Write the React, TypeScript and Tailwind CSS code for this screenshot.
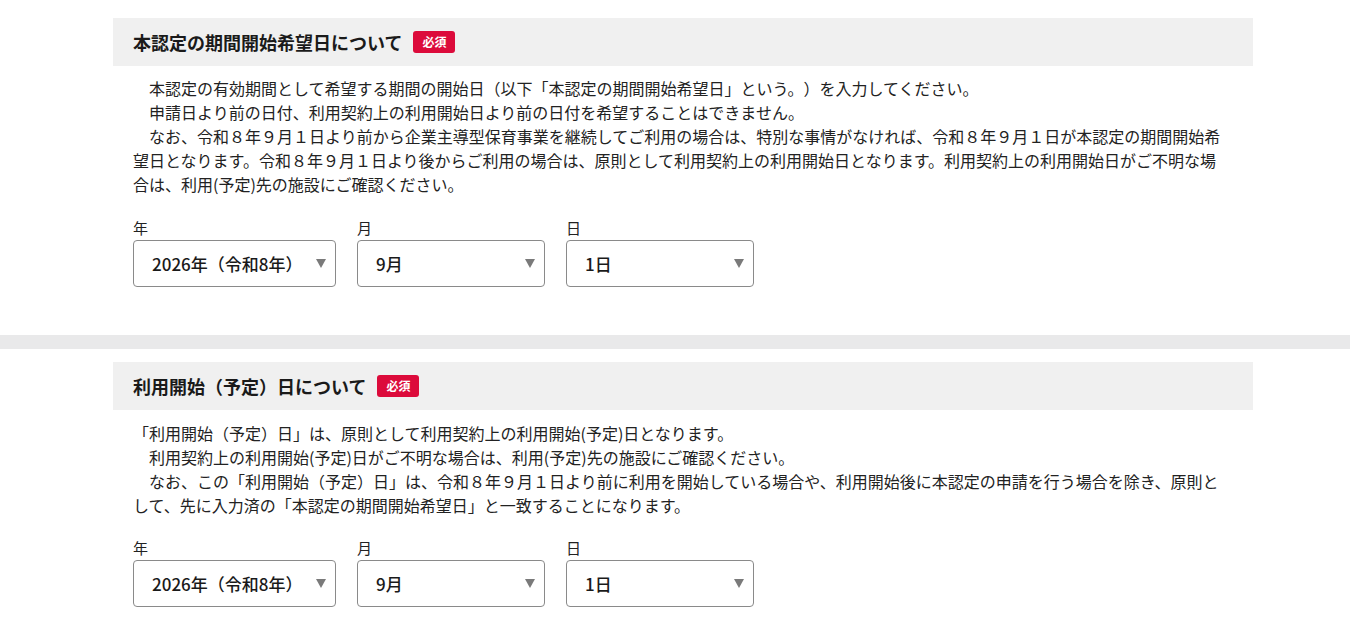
import React from 'react';

const font = { fontFamily: '"Noto Sans CJK JP", "Noto Sans", sans-serif' };

const DateSelect = ({ value, width }: { value: string; width: string }) => (
  <div className={`relative ${width} h-[47px]`}>
    <div className="flex h-full items-center rounded-[4px] border border-[#8a8a8a] bg-white pl-[18px] text-[17px] font-medium text-[#1a1a1a]">
      {value}
    </div>
    <svg
      className="absolute right-[10px] top-[19px] h-[9px] w-[10px]"
      viewBox="0 0 10 9"
    >
      <path d="M0 0 L10 0 L5 9 Z" fill="#7a7a7a" />
    </svg>
  </div>
);

const DateRow = () => (
  <div className="flex gap-[21px]">
    {[
      { label: '年', value: '2026年（令和8年）', width: 'w-[203px]' },
      { label: '月', value: '9月', width: 'w-[188px]' },
      { label: '日', value: '1日', width: 'w-[188px]' },
    ].map((item, index) => (
      <div key={index} className="flex flex-col gap-[2px]">
        <span className="text-[15px] leading-[20px] text-[#222]">{item.label}</span>
        <DateSelect value={item.value} width={item.width} />
      </div>
    ))}
  </div>
);

const SectionHeader = ({ title }: { title: string }) => (
  <div className="flex h-[48px] items-center gap-[11px] bg-[#f0f0f0] px-[20px]">
    <h2 className="text-[18px] font-bold text-[#1a1a1a]">{title}</h2>
    <span className="flex h-[22px] w-[42px] items-center justify-center rounded-[3px] bg-[#dc0b3b] text-[12px] font-bold text-white">
      必須
    </span>
  </div>
);

const App = () => {
  return (
    <div className="min-h-screen bg-white [text-spacing-trim:space-all]" style={font}>
      <section className="ml-[113px] w-[1140px] pt-[18px] pb-[48px]">
        <SectionHeader title="本認定の期間開始希望日について" />
        <div className="pl-[20px] pr-[26px] pt-[10px] text-[16px] leading-[24px] text-[#222]">
          <p>{'　本認定の有効期間として希望する期間の開始日（以下「本認定の期間開始希望日」という。）を入力してください。'}</p>
          <p>{'　申請日より前の日付、利用契約上の利用開始日より前の日付を希望することはできません。'}</p>
          <p>
            {'　なお、令和８年９月１日より前から企業主導型保育事業を継続してご利用の場合は、特別な事情がなければ、令和８年９月１日が本認定の期間開始希望日となります。令和８年９月１日より後からご利用の場合は、原則として利用契約上の利用開始日となります。利用契約上の利用開始日がご不明な場合は、利用(予定)先の施設にご確認ください。'}
          </p>
          <div className="pt-[22px]">
            <DateRow />
          </div>
        </div>
      </section>

      <div className="h-[14px] w-full bg-[#e9e9ea]" />

      <section className="ml-[113px] w-[1140px] pt-[13px] pb-[40px]">
        <SectionHeader title="利用開始（予定）日について" />
        <div className="pl-[20px] pr-[26px] pt-[11px] text-[16px] leading-[24px] text-[#222]">
          <p>{'「利用開始（予定）日」は、原則として利用契約上の利用開始(予定)日となります。'}</p>
          <p>{'　利用契約上の利用開始(予定)日がご不明な場合は、利用(予定)先の施設にご確認ください。'}</p>
          <p>
            {'　なお、この「利用開始（予定）日」は、令和８年９月１日より前に利用を開始している場合や、利用開始後に本認定の申請を行う場合を除き、原則として、先に入力済の「本認定の期間開始希望日」と一致することになります。'}
          </p>
          <div className="pt-[21px]">
            <DateRow />
          </div>
        </div>
      </section>
    </div>
  );
};

export default App;
